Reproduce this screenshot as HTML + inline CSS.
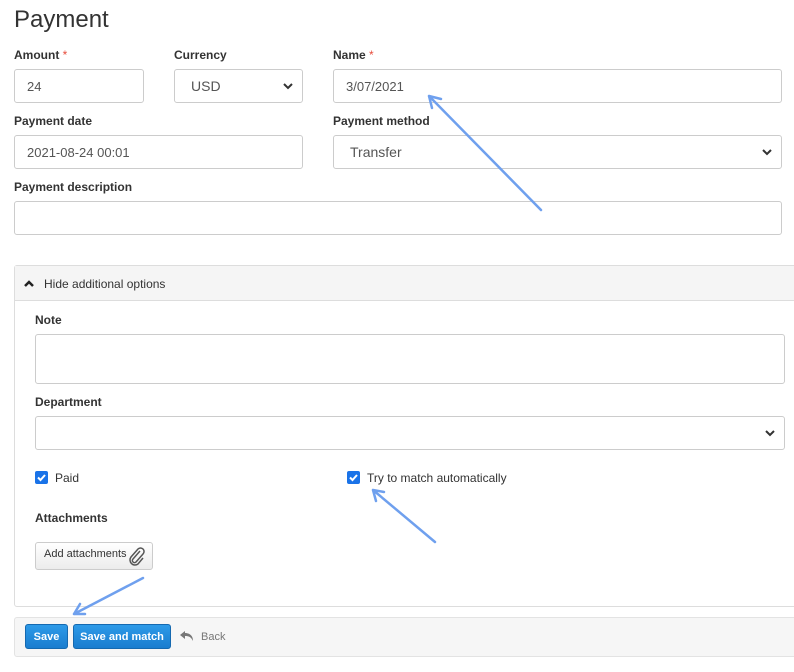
<!DOCTYPE html>
<html><head><style>
*{box-sizing:border-box}
body{margin:0;width:794px;height:672px;background:#fff;font-family:"Liberation Sans",Arial,sans-serif;color:#333;position:relative;overflow:hidden;font-size:12px}
.a{position:absolute}
.lbl{position:absolute;font-weight:bold;font-size:12px;color:#333}
.req{color:#e74c3c;font-weight:normal}
.inp{position:absolute;border:1px solid #ccc;border-radius:3px;background:#fff;font-size:13px;color:#555;padding-left:12px;display:flex;align-items:center}
.chev{position:absolute;right:8px;top:50%;margin-top:-4px;width:12px;height:8px}
.cb{position:absolute;width:13px;height:13px;background:#1a73e8;border-radius:2px}
.btn{position:absolute;background:linear-gradient(#2d9ae8,#1a7dcf);border:1px solid #1569b0;border-radius:3px;color:#fff;font-weight:bold;font-size:11px;display:flex;align-items:center;justify-content:center}
</style></head><body>
<div class="a" style="left:14px;top:6px;font-size:24px;color:#333">Payment</div>
<div class="lbl" style="left:14px;top:48px">Amount <span class="req">*</span></div>
<div class="lbl" style="left:174px;top:48px">Currency</div>
<div class="lbl" style="left:333px;top:48px">Name <span class="req">*</span></div>
<div class="inp" style="left:14px;top:69px;width:130px;height:34px">24</div>
<div class="inp" style="left:174px;top:69px;width:129px;height:34px;padding-left:16px;font-size:14px">USD<svg class="chev" viewBox="0 0 12 8"><path d="M2 2l4 4 4-4" stroke="#333" stroke-width="2" fill="none"/></svg></div>
<div class="inp" style="left:333px;top:69px;width:449px;height:34px">3/07/2021</div>
<div class="lbl" style="left:14px;top:114px">Payment date</div>
<div class="lbl" style="left:333px;top:114px">Payment method</div>
<div class="inp" style="left:14px;top:135px;width:289px;height:34px">2021-08-24 00:01</div>
<div class="inp" style="left:333px;top:135px;width:449px;height:34px;padding-left:16px;font-size:14px">Transfer<svg class="chev" viewBox="0 0 12 8"><path d="M2 2l4 4 4-4" stroke="#333" stroke-width="2" fill="none"/></svg></div>
<div class="lbl" style="left:14px;top:180px">Payment description</div>
<div class="inp" style="left:14px;top:201px;width:768px;height:34px"></div>

<div class="a" style="left:14px;top:265px;width:800px;height:342px;border:1px solid #ddd;border-radius:3px"></div>
<div class="a" style="left:15px;top:266px;width:800px;height:35px;background:#f5f5f5;border-bottom:1px solid #ddd"></div>
<svg class="a" style="left:23px;top:279px" width="12" height="9" viewBox="0 0 12 9"><path d="M2 7l4-4 4 4" stroke="#222" stroke-width="2.5" fill="none"/></svg>
<div class="a" style="left:44px;top:277px;color:#333">Hide additional options</div>
<div class="lbl" style="left:35px;top:313px">Note</div>
<div class="inp" style="left:35px;top:334px;width:750px;height:50px"></div>
<div class="lbl" style="left:35px;top:395px">Department</div>
<div class="inp" style="left:35px;top:416px;width:750px;height:34px"><svg class="chev" viewBox="0 0 12 8"><path d="M2 2l4 4 4-4" stroke="#333" stroke-width="2" fill="none"/></svg></div>
<div class="cb" style="left:35px;top:471px"><svg width="13" height="13" viewBox="0 0 13 13"><path d="M3 6.5l2.5 2.5 4.5-5" stroke="#fff" stroke-width="2" fill="none"/></svg></div>
<div class="a" style="left:55px;top:471px">Paid</div>
<div class="cb" style="left:347px;top:471px"><svg width="13" height="13" viewBox="0 0 13 13"><path d="M3 6.5l2.5 2.5 4.5-5" stroke="#fff" stroke-width="2" fill="none"/></svg></div>
<div class="a" style="left:367px;top:471px">Try to match automatically</div>
<div class="lbl" style="left:35px;top:511px">Attachments</div>
<div class="a" style="left:35px;top:542px;width:118px;height:28px;border:1px solid #ccc;border-radius:3px;background:linear-gradient(#fff,#ececec);font-size:11px;padding:5px 0 0 8px">Add attachments</div>
<svg class="a" style="left:128px;top:546px" width="18" height="20" viewBox="0 0 18 20"><path d="M12 5l-7 8a2 2 0 0 0 3 3l7-8a3.5 3.5 0 0 0-5-5l-7 8a5 5 0 0 0 7 7l5-6" stroke="#555" stroke-width="1.5" fill="none"/></svg>

<div class="a" style="left:14px;top:617px;width:800px;height:40px;background:#f6f6f6;border:1px solid #e3e3e3;border-radius:3px"></div>
<div class="btn" style="left:25px;top:624px;width:43px;height:25px">Save</div>
<div class="btn" style="left:73px;top:624px;width:98px;height:25px">Save and match</div>
<svg class="a" style="left:179px;top:629px" width="16" height="14" viewBox="0 0 16 14"><path d="M6 2L1 6l5 4V7c4 0 6 1 8 5 0-5-3-8-8-8z" fill="#777"/></svg>
<div class="a" style="left:201px;top:631px;color:#777;font-size:11px">Back</div>

<svg class="a" style="left:0;top:0" width="794" height="672">
<g stroke="#6fa0ee" stroke-width="2.5" fill="none" stroke-linecap="round">
<path d="M541 210L429 96M429 96l3 12M429 96l12 3"/>
<path d="M435 542L373 490M373 490l3 11M373 490l11 2"/>
<path d="M143 578L74 614M74 614l6-10M74 614l11 0"/>
</g></svg>
</body></html>
